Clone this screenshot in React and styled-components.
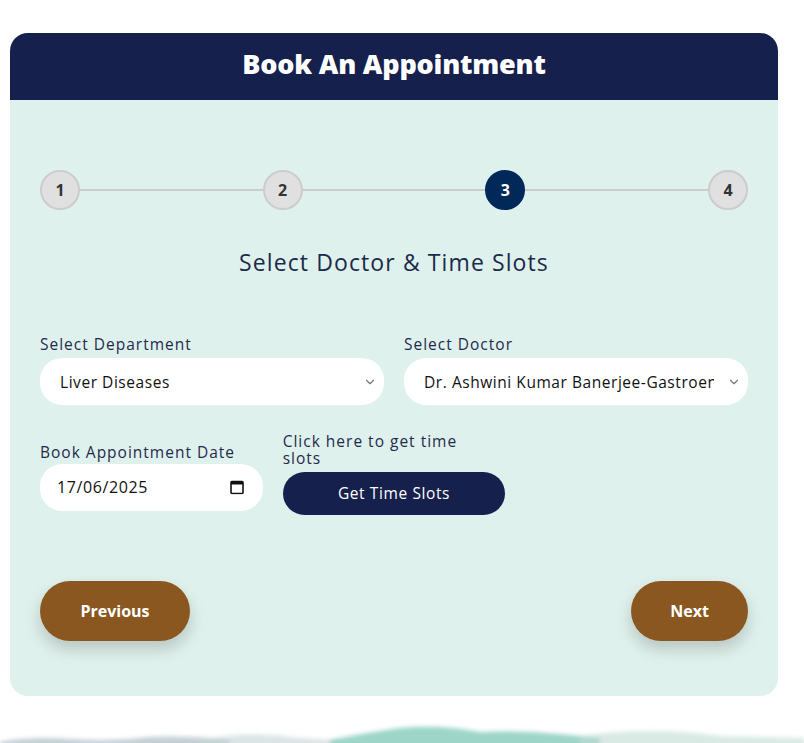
import styled, { createGlobalStyle } from 'styled-components';
import { ChevronDown } from 'lucide-react';

const GlobalStyle = createGlobalStyle`
  body {
    margin: 0;
    background: #ffffff;
    font-family: 'Open Sans', 'Liberation Sans', sans-serif;
  }
  * { box-sizing: border-box; }
`;

const Page = styled.div`
  width: 804px;
  height: 743px;
  overflow: hidden;
  display: flex;
  flex-direction: column;
  padding: 33px 26px 0 10px;
`;

const Card = styled.div`
  flex-shrink: 0;
  border-radius: 18px;
  overflow: hidden;
  background: #dff1ec;
  height: 663px;
`;

const Header = styled.div`
  height: 67px;
  background: #16204d;
  display: flex;
  align-items: center;
  justify-content: center;
  padding-bottom: 7px;

  h1 {
    margin: 0;
    color: #ffffff;
    font-size: 27px;
    font-weight: 800;
    letter-spacing: -0.2px;
  }
`;

const Body = styled.div`
  padding: 70px 30px 0;
`;

const Stepper = styled.div`
  position: relative;
  display: flex;
  justify-content: space-between;
  align-items: center;

  &::before {
    content: '';
    position: absolute;
    left: 20px;
    right: 20px;
    top: 50%;
    height: 2px;
    margin-top: -1px;
    background: #cccccc;
  }
`;

const Step = styled.div`
  position: relative;
  width: 40px;
  height: 40px;
  border-radius: 50%;
  display: flex;
  align-items: center;
  justify-content: center;
  font-size: 16px;
  font-weight: 700;
  background: ${(p) => (p.$active ? '#00295a' : '#e0e0e0')};
  color: ${(p) => (p.$active ? '#ffffff' : '#333333')};
  border: 2px solid ${(p) => (p.$active ? '#00295a' : '#cccccc')};
`;

const Title = styled.h2`
  margin: 36px 0 0;
  text-align: center;
  font-size: 23px;
  font-weight: 400;
  letter-spacing: 1.1px;
  color: #1b2a4a;
`;

const Grid = styled.div`
  display: grid;
  grid-template-columns: repeat(${(p) => p.$cols}, minmax(0, 1fr));
  gap: 20px;
  align-items: end;
  margin-top: ${(p) => p.$top}px;
`;

const Field = styled.div`
  display: flex;
  flex-direction: column;
  gap: ${(p) => p.$gap || 4}px;
  padding-bottom: ${(p) => p.$lift || 0}px;
`;

const Label = styled.label`
  font-size: 15.5px;
  color: #1f2a4d;
  letter-spacing: 1px;
  line-height: 1.05;
  max-width: ${(p) => p.$max || 'none'};
`;

const Control = styled.div`
  position: relative;

  svg {
    position: absolute;
    right: ${(p) => p.$iconRight || 7}px;
    top: 50%;
    transform: translateY(-50%);
    pointer-events: none;
  }
`;

const Select = styled.select`
  appearance: none;
  width: 100%;
  height: 47px;
  border: none;
  border-radius: 22px;
  background: #ffffff;
  padding: 0 34px 0 20px;
  font-family: inherit;
  font-size: 15.5px;
  letter-spacing: 0.55px;
  color: #111111;
  outline: none;
`;

const DateInput = styled.input`
  width: 100%;
  height: 47px;
  border: none;
  border-radius: 22px;
  background: #ffffff;
  padding: 0 17px;
  font-family: inherit;
  font-size: 16px;
  letter-spacing: 0.6px;
  color: #111111;
  outline: none;
`;

const SlotButton = styled.button`
  height: 43px;
  border: none;
  border-radius: 22px;
  background: #16204d;
  color: #ffffff;
  font-family: inherit;
  font-size: 15.5px;
  letter-spacing: 0.6px;
  cursor: pointer;
`;

const Nav = styled.div`
  display: flex;
  justify-content: space-between;
  margin-top: 66px;
`;

const NavButton = styled.button`
  height: 60px;
  width: ${(p) => p.$w}px;
  border: none;
  border-radius: 30px;
  background: #8b5720;
  color: #ffffff;
  font-family: inherit;
  font-size: 16px;
  font-weight: 700;
  box-shadow: 0 8px 16px rgba(0, 0, 0, 0.18);
  cursor: pointer;
`;

const Wash = styled.svg`
  display: block;
  flex-shrink: 0;
  margin: 22px 0 0 -10px;
`;

function CalendarIcon() {
  return (
    <svg width="14" height="15" viewBox="0 0 14 15">
      <rect x="1" y="2" width="12" height="12" rx="1" fill="none" stroke="#111" strokeWidth="1.6" />
      <rect x="1" y="2" width="12" height="3" fill="#111" />
    </svg>
  );
}

export default function App() {
  return (
    <Page>
      <GlobalStyle />
      <Card>
        <Header>
          <h1>Book An Appointment</h1>
        </Header>
        <Body>
          <Stepper>
            <Step>1</Step>
            <Step>2</Step>
            <Step $active>3</Step>
            <Step>4</Step>
          </Stepper>
          <Title>Select Doctor &amp; Time Slots</Title>
          <Grid $cols={2} $top={58}>
            <Field $gap={6}>
              <Label>Select Department</Label>
              <Control>
                <Select defaultValue="liver">
                  <option value="liver">Liver Diseases</option>
                </Select>
                <ChevronDown size={14} color="#777" strokeWidth={2} />
              </Control>
            </Field>
            <Field $gap={6}>
              <Label>Select Doctor</Label>
              <Control>
                <Select defaultValue="dr">
                  <option value="dr">Dr. Ashwini Kumar Banerjee-Gastroenterology</option>
                </Select>
                <ChevronDown size={14} color="#777" strokeWidth={2} />
              </Control>
            </Field>
          </Grid>
          <Grid $cols={3} $top={28}>
            <Field $lift={4}>
              <Label>Book Appointment Date</Label>
              <Control $iconRight={19}>
                <DateInput type="text" defaultValue="17/06/2025" />
                <CalendarIcon />
              </Control>
            </Field>
            <Field $gap={6}>
              <Label $max="200px">Click here to get time slots</Label>
              <SlotButton>Get Time Slots</SlotButton>
            </Field>
          </Grid>
          <Nav>
            <NavButton $w={150}>Previous</NavButton>
            <NavButton $w={117}>Next</NavButton>
          </Nav>
        </Body>
      </Card>
      <Wash width="804" height="30" viewBox="0 0 804 30">
        <defs>
          <filter id="blur" x="-10%" y="-50%" width="120%" height="200%">
            <feGaussianBlur stdDeviation="2" />
          </filter>
        </defs>
        <g filter="url(#blur)">
          <path d="M0 24 Q30 18 70 21 T150 19 Q190 17 230 22 L230 30 L0 30 Z" fill="#a9bcc6" opacity="0.7" />
          <path d="M200 22 Q250 12 300 20 L340 22 L340 30 L200 30 Z" fill="#c5d3d6" opacity="0.6" />
          <path d="M330 22 Q370 14 400 10 Q440 6 480 14 Q520 12 560 16 L600 20 L600 30 L330 30 Z" fill="#8ccfbf" opacity="0.85" />
          <path d="M580 18 Q650 8 720 18 L804 20 L804 30 L580 30 Z" fill="#c0dcd4" opacity="0.6" />
        </g>
      </Wash>
    </Page>
  );
}
